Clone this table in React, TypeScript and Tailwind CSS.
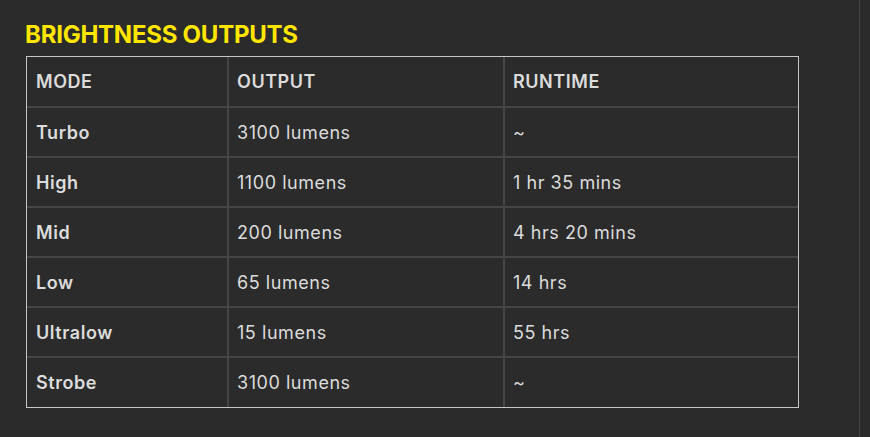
const ROWS: [string, string, string][] = [
  ["Turbo", "3100 lumens", "~"],
  ["High", "1100 lumens", "1 hr 35 mins"],
  ["Mid", "200 lumens", "4 hrs 20 mins"],
  ["Low", "65 lumens", "14 hrs"],
  ["Ultralow", "15 lumens", "55 hrs"],
  ["Strobe", "3100 lumens", "~"],
];

export default function App() {
  return (
    <div
      className="w-[870px] h-[437px] bg-[#2b2b2b] flex overflow-hidden"
      style={{ fontFamily: "Inter, 'Noto Sans', sans-serif" }}
    >
      <div className="w-[859px] pl-[25px] pt-[20px]">
        <h2 className="text-[24px] leading-[30px] font-bold text-[#ffe600] tracking-[-0.25px]">
          BRIGHTNESS OUTPUTS
        </h2>
        <div className="mt-[6px] ml-px w-[773px] border border-[#c6c6c6]">
          <table className="w-full border-collapse text-[18px] tracking-[0.55px] text-[#dcdcdc]">
            <colgroup>
              <col className="w-[201px]" />
              <col className="w-[276px]" />
              <col />
            </colgroup>
            <thead>
              <tr className="h-[50px]">
                <th className="text-left font-semibold pl-[9px] pr-2 border-b-2 border-r-2 border-[#454545]">MODE</th>
                <th className="text-left font-semibold pl-[8px] pr-2 border-b-2 border-r-2 border-[#454545]">OUTPUT</th>
                <th className="text-left font-semibold pl-[8px] pr-2 border-b-2 border-[#454545]">RUNTIME</th>
              </tr>
            </thead>
            <tbody>
              {ROWS.map(([mode, output, runtime], i) => {
                const last = i === ROWS.length - 1;
                return (
                  <tr key={mode} className="h-[50px]">
                    <td className={`pl-[9px] pr-2 font-semibold border-r-2 border-[#454545] ${last ? "" : "border-b-2"}`}>{mode}</td>
                    <td className={`pl-[8px] pr-2 border-r-2 border-[#454545] ${last ? "" : "border-b-2"}`}>{output}</td>
                    <td className={`pl-[8px] pr-2 border-[#454545] ${last ? "" : "border-b-2"}`}>{runtime}</td>
                  </tr>
                );
              })}
            </tbody>
          </table>
        </div>
      </div>
      <div className="w-px bg-[#444]" />
    </div>
  );
}
